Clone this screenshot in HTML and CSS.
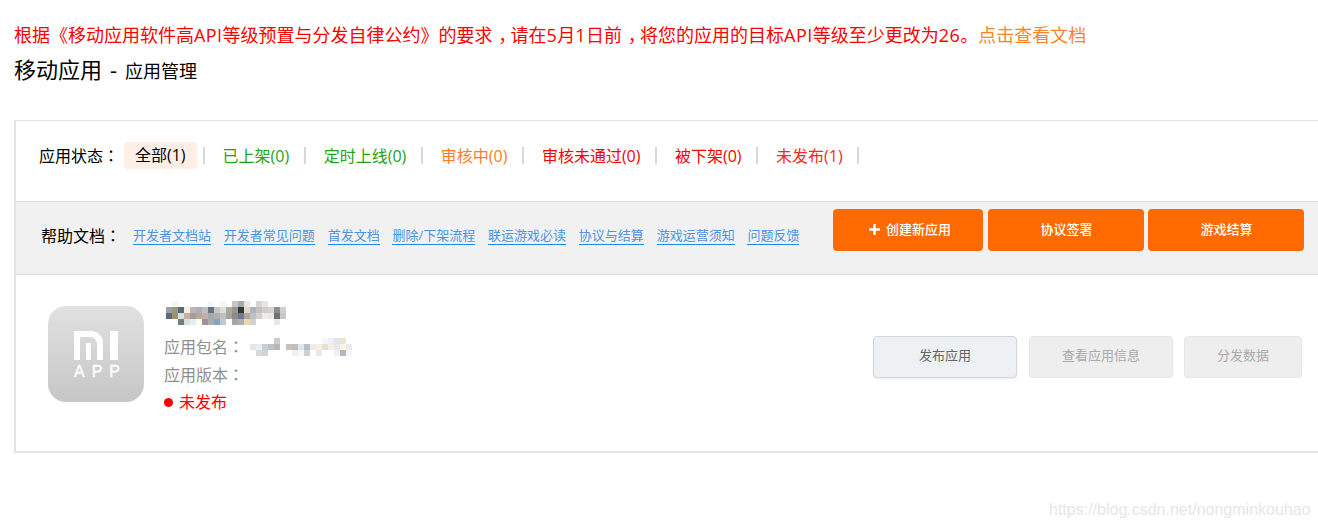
FILE: index.html
```html
<!DOCTYPE html>
<html lang="zh-CN">
<head>
<meta charset="utf-8">
<title>移动应用 - 应用管理</title>
<link rel="stylesheet" href="styles.css">
</head>
<body>
<p class="notice">根据《移动应用软件高<span class="latin">API</span>等级预置与分发自律公约》的要求<span class="comma">，</span>请在<span class="latin">5</span>月<span class="latin">1</span>日前<span class="comma">，</span>将您的应用的目标<span class="latin">API</span>等级至少更改为<span class="latin">26</span>。<a class="notice-link">点击查看文档</a></p>
<h1 class="title">移动应用<span class="title-dash">-</span><small class="title-sub">应用管理</small></h1>

<section class="card">
  <div class="status">
    <span class="status-label">应用状态<span class="tc">：</span></span>
    <a class="pill">全部(1)</a><i class="sep sep-first"></i>
    <a class="st green">已上架(0)</a><i class="sep"></i>
    <a class="st green">定时上线(0)</a><i class="sep"></i>
    <a class="st orange">审核中(0)</a><i class="sep"></i>
    <a class="st red">审核未通过(0)</a><i class="sep"></i>
    <a class="st red">被下架(0)</a><i class="sep"></i>
    <a class="st red2">未发布(1)</a><i class="sep"></i>
  </div>

  <div class="toolbar">
    <span class="help-label">帮助文档<span class="tc">：</span></span>
    <nav class="links">
      <a>开发者文档站</a><a>开发者常见问题</a><a>首发文档</a><a>删除/下架流程</a><a>联运游戏必读</a><a>协议与结算</a><a>游戏运营须知</a><a>问题反馈</a>
    </nav>
    <div class="tool-btns">
      <a class="obtn obtn-wide"><svg class="plus" viewBox="0 0 11 11" width="11" height="11"><path d="M4.3 0h2.4v4.3H11v2.4H6.7V11H4.3V6.7H0V4.3h4.3z" fill="#fff"/></svg>创建新应用</a>
      <a class="obtn">协议签署</a>
      <a class="obtn">游戏结算</a>
    </div>
  </div>

  <div class="app">
    <svg class="logo" viewBox="0 0 96 96" width="96" height="96">
      <defs><linearGradient id="lg" x1="0" y1="0" x2="0" y2="1"><stop offset="0" stop-color="#e1e1e1"/><stop offset="1" stop-color="#c6c6c6"/></linearGradient></defs>
      <rect width="96" height="96" rx="18" fill="url(#lg)"/>
      <path fill="#fff" d="M26 25H43a12 12 0 0 1 12 12V54H49V38a7 7 0 0 0-7-7H32V54H26ZM38 37H43V54H38ZM62 25H70V54H62Z"/>
      <text class="logo-text" x="26" y="71">APP</text>
    </svg>
    <div class="info">
      <svg class="mosaic-name" viewBox="0 0 20 5" width="120" height="30" shape-rendering="crispEdges">
        <g>
          <rect x="1" y="0" width="1" height="1" fill="#fbf5e8"/><rect x="7" y="0" width="1" height="1" fill="#f2f8ff"/><rect x="9" y="0" width="1" height="1" fill="#f3f7f0"/><rect x="11" y="0" width="1" height="1" fill="#c4c4c8"/><rect x="12" y="0" width="1" height="1" fill="#a8a8a8"/><rect x="13" y="0" width="1" height="1" fill="#ece6de"/><rect x="15" y="0" width="1" height="1" fill="#d8d4d0"/><rect x="16" y="0" width="1" height="1" fill="#e8e4e0"/>
          <rect x="0" y="1" width="1" height="1" fill="#9da0a8"/><rect x="1" y="1" width="1" height="1" fill="#8f9a88"/><rect x="2" y="1" width="1" height="1" fill="#5e6678"/><rect x="3" y="1" width="1" height="1" fill="#f5efe2"/><rect x="4" y="1" width="1" height="1" fill="#c0b4bc"/><rect x="5" y="1" width="1" height="1" fill="#a9b0b6"/><rect x="6" y="1" width="1" height="1" fill="#c0c0c0"/><rect x="7" y="1" width="1" height="1" fill="#687480"/><rect x="8" y="1" width="1" height="1" fill="#c4c8c4"/><rect x="9" y="1" width="1" height="1" fill="#dde0d8"/><rect x="10" y="1" width="1" height="1" fill="#aaa8a0"/><rect x="11" y="1" width="1" height="1" fill="#9a958c"/><rect x="12" y="1" width="1" height="1" fill="#303836"/><rect x="13" y="1" width="1" height="1" fill="#e0d5c8"/><rect x="14" y="1" width="1" height="1" fill="#a8b4c4"/><rect x="15" y="1" width="1" height="1" fill="#c8c0bc"/><rect x="16" y="1" width="1" height="1" fill="#d4cdcc"/><rect x="17" y="1" width="1" height="1" fill="#d8d4d4"/><rect x="18" y="1" width="1" height="1" fill="#948a88"/><rect x="19" y="1" width="1" height="1" fill="#d0d0d0"/>
          <rect x="0" y="2" width="1" height="1" fill="#606880"/><rect x="1" y="2" width="1" height="1" fill="#a09068"/><rect x="2" y="2" width="1" height="1" fill="#cfe0ee"/><rect x="3" y="2" width="1" height="1" fill="#c4b0a4"/><rect x="4" y="2" width="1" height="1" fill="#a69c96"/><rect x="5" y="2" width="1" height="1" fill="#b8a898"/><rect x="6" y="2" width="1" height="1" fill="#c0b0a8"/><rect x="7" y="2" width="1" height="1" fill="#a8a8ac"/><rect x="8" y="2" width="1" height="1" fill="#b0b0b0"/><rect x="9" y="2" width="1" height="1" fill="#c0c0bc"/><rect x="10" y="2" width="1" height="1" fill="#a8a49c"/><rect x="11" y="2" width="1" height="1" fill="#8c8c90"/><rect x="12" y="2" width="1" height="1" fill="#707898"/><rect x="13" y="2" width="1" height="1" fill="#b0a8a0"/><rect x="14" y="2" width="1" height="1" fill="#c0c0c0"/><rect x="15" y="2" width="1" height="1" fill="#d0d0cc"/><rect x="16" y="2" width="1" height="1" fill="#f0ece8"/><rect x="17" y="2" width="1" height="1" fill="#e8e8e8"/><rect x="18" y="2" width="1" height="1" fill="#707078"/><rect x="19" y="2" width="1" height="1" fill="#c8c8c4"/>
          <rect x="2" y="3" width="1" height="1" fill="#708080"/><rect x="3" y="3" width="1" height="1" fill="#e0dcd8"/><rect x="4" y="3" width="1" height="1" fill="#e0eefa"/><rect x="5" y="3" width="1" height="1" fill="#fdfcf0"/><rect x="6" y="3" width="1" height="1" fill="#a09098"/><rect x="7" y="3" width="1" height="1" fill="#acacac"/><rect x="8" y="3" width="1" height="1" fill="#88a0c4"/><rect x="9" y="3" width="1" height="1" fill="#c0c8cc"/><rect x="11" y="3" width="1" height="1" fill="#a8a4a8"/><rect x="12" y="3" width="1" height="1" fill="#b0acb8"/><rect x="13" y="3" width="1" height="1" fill="#ecd8b0"/><rect x="14" y="3" width="1" height="1" fill="#d0d0d0"/><rect x="18" y="3" width="1" height="1" fill="#e8e8ec"/>
        </g>
      </svg>
      <div class="meta meta-pkg">
        <span>应用包名<span class="tc">：</span></span>
        <svg class="mosaic-pkg" viewBox="0 0 17 3" width="102" height="18" shape-rendering="crispEdges">
          <rect x="4" y="0" width="1" height="1" fill="#d0ccc8"/><rect x="12" y="0" width="1" height="1" fill="#f4f7fb"/><rect x="13" y="0" width="1" height="1" fill="#eceef4"/><rect x="14" y="0" width="1" height="1" fill="#e2e4ea"/><rect x="15" y="0" width="1" height="1" fill="#ebe3d8"/>
          <rect x="0" y="1" width="1" height="1" fill="#e8e4e0"/><rect x="1" y="1" width="1" height="1" fill="#e4eef4"/><rect x="2" y="1" width="1" height="1" fill="#c8ced8"/><rect x="3" y="1" width="1" height="1" fill="#c0c4c8"/><rect x="4" y="1" width="1" height="1" fill="#b8b8b8"/><rect x="6" y="1" width="1" height="1" fill="#c8c0bc"/><rect x="7" y="1" width="1" height="1" fill="#c4bcbc"/><rect x="8" y="1" width="1" height="1" fill="#dce8ee"/><rect x="9" y="1" width="1" height="1" fill="#b8c0c8"/><rect x="10" y="1" width="1" height="1" fill="#f0ecdf"/><rect x="11" y="1" width="1" height="1" fill="#f4f0e8"/><rect x="12" y="1" width="1" height="1" fill="#e8dfd4"/><rect x="13" y="1" width="1" height="1" fill="#f8efe4"/><rect x="14" y="1" width="1" height="1" fill="#e8e8ee"/><rect x="15" y="1" width="1" height="1" fill="#fcf4e4"/><rect x="16" y="1" width="1" height="1" fill="#e8ecf2"/>
          <rect x="1" y="2" width="1" height="1" fill="#dcd8d4"/><rect x="2" y="2" width="1" height="1" fill="#d4d4d4"/><rect x="7" y="2" width="1" height="1" fill="#f0efec"/><rect x="8" y="2" width="1" height="1" fill="#f4f7fc"/><rect x="9" y="2" width="1" height="1" fill="#d0d0d8"/><rect x="11" y="2" width="1" height="1" fill="#e8e8e8"/><rect x="14" y="2" width="1" height="1" fill="#f0f0f4"/><rect x="15" y="2" width="1" height="1" fill="#b8b4c0"/><rect x="16" y="2" width="1" height="1" fill="#f4f7fc"/>
        </svg>
      </div>
      <div class="meta"><span>应用版本<span class="tc">：</span></span></div>
      <div class="meta state"><i class="dot"></i>未发布</div>
    </div>
    <div class="actions">
      <a class="gbtn gbtn-primary">发布应用</a>
      <a class="gbtn gbtn-off gbtn-info">查看应用信息</a>
      <a class="gbtn gbtn-off gbtn-data">分发数据</a>
    </div>
  </div>
</section>

<div class="watermark">https://blog.csdn.net/nongminkouhao</div>
</body>
</html>
```

FILE: styles.css
```css
* { box-sizing: border-box; }
html, body { height: 528px; overflow: hidden; }
body {
  margin: 0;
  padding-left: 14px;
  background: #fff;
  color: #000;
  font-family: "Open Sans", "Noto Sans CJK SC", sans-serif;
  text-spacing-trim: space-all;
}
a { text-decoration: none; }
i { display: block; }
.tc { display: inline-block; font-family: "Noto Sans CJK TC", sans-serif; }
.comma {
  display: inline-block;
  padding: 0 .18em 0 .32em;
  font-feature-settings: "halt";
}

.notice {
  margin: 0;
  padding-top: 23px;
  font-size: 18px;
  line-height: 24px;
  color: #f00;
  white-space: nowrap;
}
.latin { letter-spacing: .45px; }
.notice-link { color: #ff8326; }

.title {
  margin: 7px 0 0;
  display: flex;
  align-items: baseline;
  font-size: 22px;
  line-height: 30px;
  font-weight: 400;
}
.title-dash { margin: 0 8px 0 8px; }
.title-sub { font-size: 18px; }

.card {
  width: 1330px;
  margin-top: 34px;
  height: 333px;
  border: 2px solid #e2e2e2;
  border-top-width: 1px;
}

.status {
  display: flex;
  align-items: center;
  height: 80px;
  padding: 0 0 12px 23px;
  font-size: 16px;
  white-space: nowrap;
}
.status-label { width: 85px; }
.pill {
  height: 27px;
  line-height: 27px;
  padding: 0 11px;
  border-radius: 4px;
  background: #fdeee6;
  color: #000;
}
.st { margin-right: 14.5px; }
.sep { width: 2px; height: 17px; background: #d8d8d8; margin-right: 18px; }
.sep-first { margin-left: 6px; }
.green { color: #22a31a; }
.orange { color: #ff7d1f; }
.red { color: #f00; }
.red2 { color: #f42a1c; }

.toolbar {
  display: flex;
  align-items: flex-start;
  height: 74px;
  padding: 7px 14px 0 25px;
  background: #f1f1f1;
  border-top: 1px solid #dcdcdc;
  border-bottom: 1px solid #dcdcdc;
  white-space: nowrap;
}
.help-label {
  font-size: 16px;
  line-height: 24px;
  margin-top: 14px;
  width: 92px;
}
.links {
  display: flex;
  gap: 12.8px;
  margin-top: 17px;
  font-size: 13px;
  line-height: 18px;
}
.links a {
  color: #4a94e6;
  border-bottom: 1px solid #1a8ceb;
  height: 19px;
}
.tool-btns { display: flex; margin-left: 34px; }
.obtn {
  width: 156px;
  height: 42px;
  line-height: 41px;
  margin-left: 4px;
  border-radius: 4px;
  background: #ff6a00;
  color: #fff;
  font-size: 13px;
  font-weight: 500;
  text-align: center;
}
.obtn-wide { width: 150px; margin-left: 0; margin-right: 1px; padding-left: 3px; }
.plus { margin-right: 6px; vertical-align: -1px; }

.app {
  display: flex;
  align-items: flex-start;
  padding: 31px 0 0 32px;
}
.logo { flex: none; }
.logo-text {
  font-family: "Liberation Sans", sans-serif;
  font-size: 16px;
  letter-spacing: 7px;
  fill: #fff;
  stroke: #fff;
  stroke-width: .4px;
}
.info { margin-left: 20px; margin-top: -5px; }
.mosaic-name { display: block; margin-left: 2px; }
.meta {
  display: flex;
  align-items: center;
  height: 28px;
  font-size: 16px;
  line-height: 28px;
  color: #8f8f8f;
  white-space: nowrap;
}
.meta-pkg { margin-top: 1px; }
.mosaic-pkg { margin-left: 6px; margin-top: 1px; }
.state { color: #f00; }
.dot {
  width: 9px;
  height: 9px;
  border-radius: 50%;
  background: #f00;
  margin-right: 6px;
}
.actions {
  display: flex;
  margin-left: auto;
  margin-top: 30px;
  margin-right: 40px;
}
.gbtn {
  height: 42px;
  line-height: 37px;
  font-size: 13px;
  text-align: center;
  border-radius: 4px;
  border: 1px solid #e6e6e6;
}
.gbtn-primary {
  width: 144px;
  background: #edf1f4;
  border-color: #d4d6d9;
  color: #666;
  box-shadow: 0 1px 2px rgba(0, 0, 0, .08);
}
.gbtn-off { background: #eee; color: #aaa; }
.gbtn-info { width: 144px; margin-left: 12px; }
.gbtn-data { width: 118px; margin-left: 11px; }

.watermark {
  position: absolute;
  left: 1049px;
  top: 500px;
  font-family: "Liberation Sans", sans-serif;
  font-size: 16px;
  line-height: 20px;
  color: #e6e6e6;
  white-space: nowrap;
}
```
